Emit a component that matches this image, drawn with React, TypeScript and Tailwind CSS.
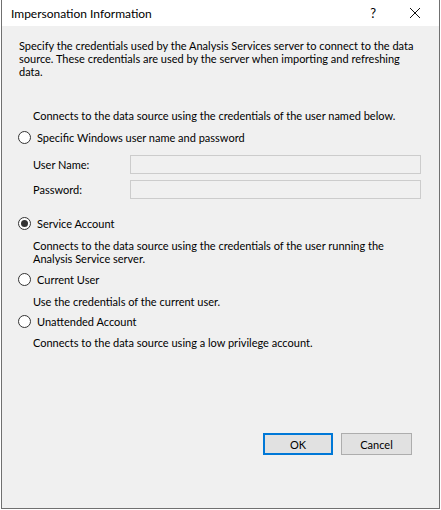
import React from 'react'

const font = { fontFamily: 'Lato, "Noto Sans", sans-serif' }

function Radio({ checked, label }: { checked?: boolean; label: string }) {
  return (
    <div className="flex items-center h-[16px]">
      <span className="w-[13px] h-[13px] rounded-full border border-[#333333] bg-white flex items-center justify-center">
        {checked && <span className="w-[7px] h-[7px] rounded-full bg-[#333333]" />}
      </span>
      <span className="ml-[6px]">{label}</span>
    </div>
  )
}

function Field({ label }: { label: string }) {
  return (
    <div className="flex items-center h-[19px]">
      <span className="w-[97px]">{label}</span>
      <div className="w-[291px] h-[19px] border border-[#cccccc] bg-[#f0f0f0]" />
    </div>
  )
}

export default function App() {
  return (
    <div className="w-[441px] h-[510px] bg-white text-black text-[11px] leading-[13px] whitespace-nowrap" style={font}>
      <div className="ml-px w-[439px] h-[509px] border-x border-b border-[#707070] bg-[#f0f0f0] flex flex-col">
        {/* Title bar */}
        <div className="h-[26px] bg-white flex items-center shrink-0">
          <span className="ml-[9px] text-[12px]">Impersonation Information</span>
          <span className="ml-auto text-[13px] mr-[33px]">?</span>
          <svg width="12" height="12" viewBox="0 0 12 12" className="mr-[18px]">
            <path d="M1 1 L11 11 M11 1 L1 11" stroke="#111" strokeWidth="1" />
          </svg>
        </div>

        <div className="pl-[17px] pr-[18px] pt-[13px]">
          <p>
            Specify the credentials used by the Analysis Services server to connect to the data
            <br />
            source. These credentials are used by the server when importing and refreshing
            <br />
            data.
          </p>

          <p className="mt-[31px] ml-[14px]">
            Connects to the data source using the credentials of the user named below.
          </p>

          <div className="mt-[7px] -ml-[1px]">
            <Radio label="Specific Windows user name and password" />
          </div>

          <div className="mt-[10px] ml-[14px] flex flex-col gap-[6px]">
            <Field label="User Name:" />
            <Field label="Password:" />
          </div>

          <div className="mt-[16px] -ml-[1px]">
            <Radio checked label="Service Account" />
          </div>
          <p className="mt-[8px] ml-[14px]">
            Connects to the data source using the credentials of the user running the
            <br />
            Analysis Service server.
          </p>

          <div className="mt-[6px] -ml-[1px]">
            <Radio label="Current User" />
          </div>
          <p className="mt-[8px] ml-[14px]">Use the credentials of the current user.</p>

          <div className="mt-[5px] -ml-[1px]">
            <Radio label="Unattended Account" />
          </div>
          <p className="mt-[7px] ml-[14px]">Connects to the data source using a low privilege account.</p>
        </div>

        <div className="mt-auto mb-[53px] flex justify-end gap-[8px] pr-[27px]">
          <button className="w-[70px] h-[22px] border-2 border-[#0078d7] bg-[#e1e1e1] text-[11px]">OK</button>
          <button className="w-[71px] h-[22px] border border-[#adadad] bg-[#e1e1e1] text-[11px]">Cancel</button>
        </div>
      </div>
    </div>
  )
}
